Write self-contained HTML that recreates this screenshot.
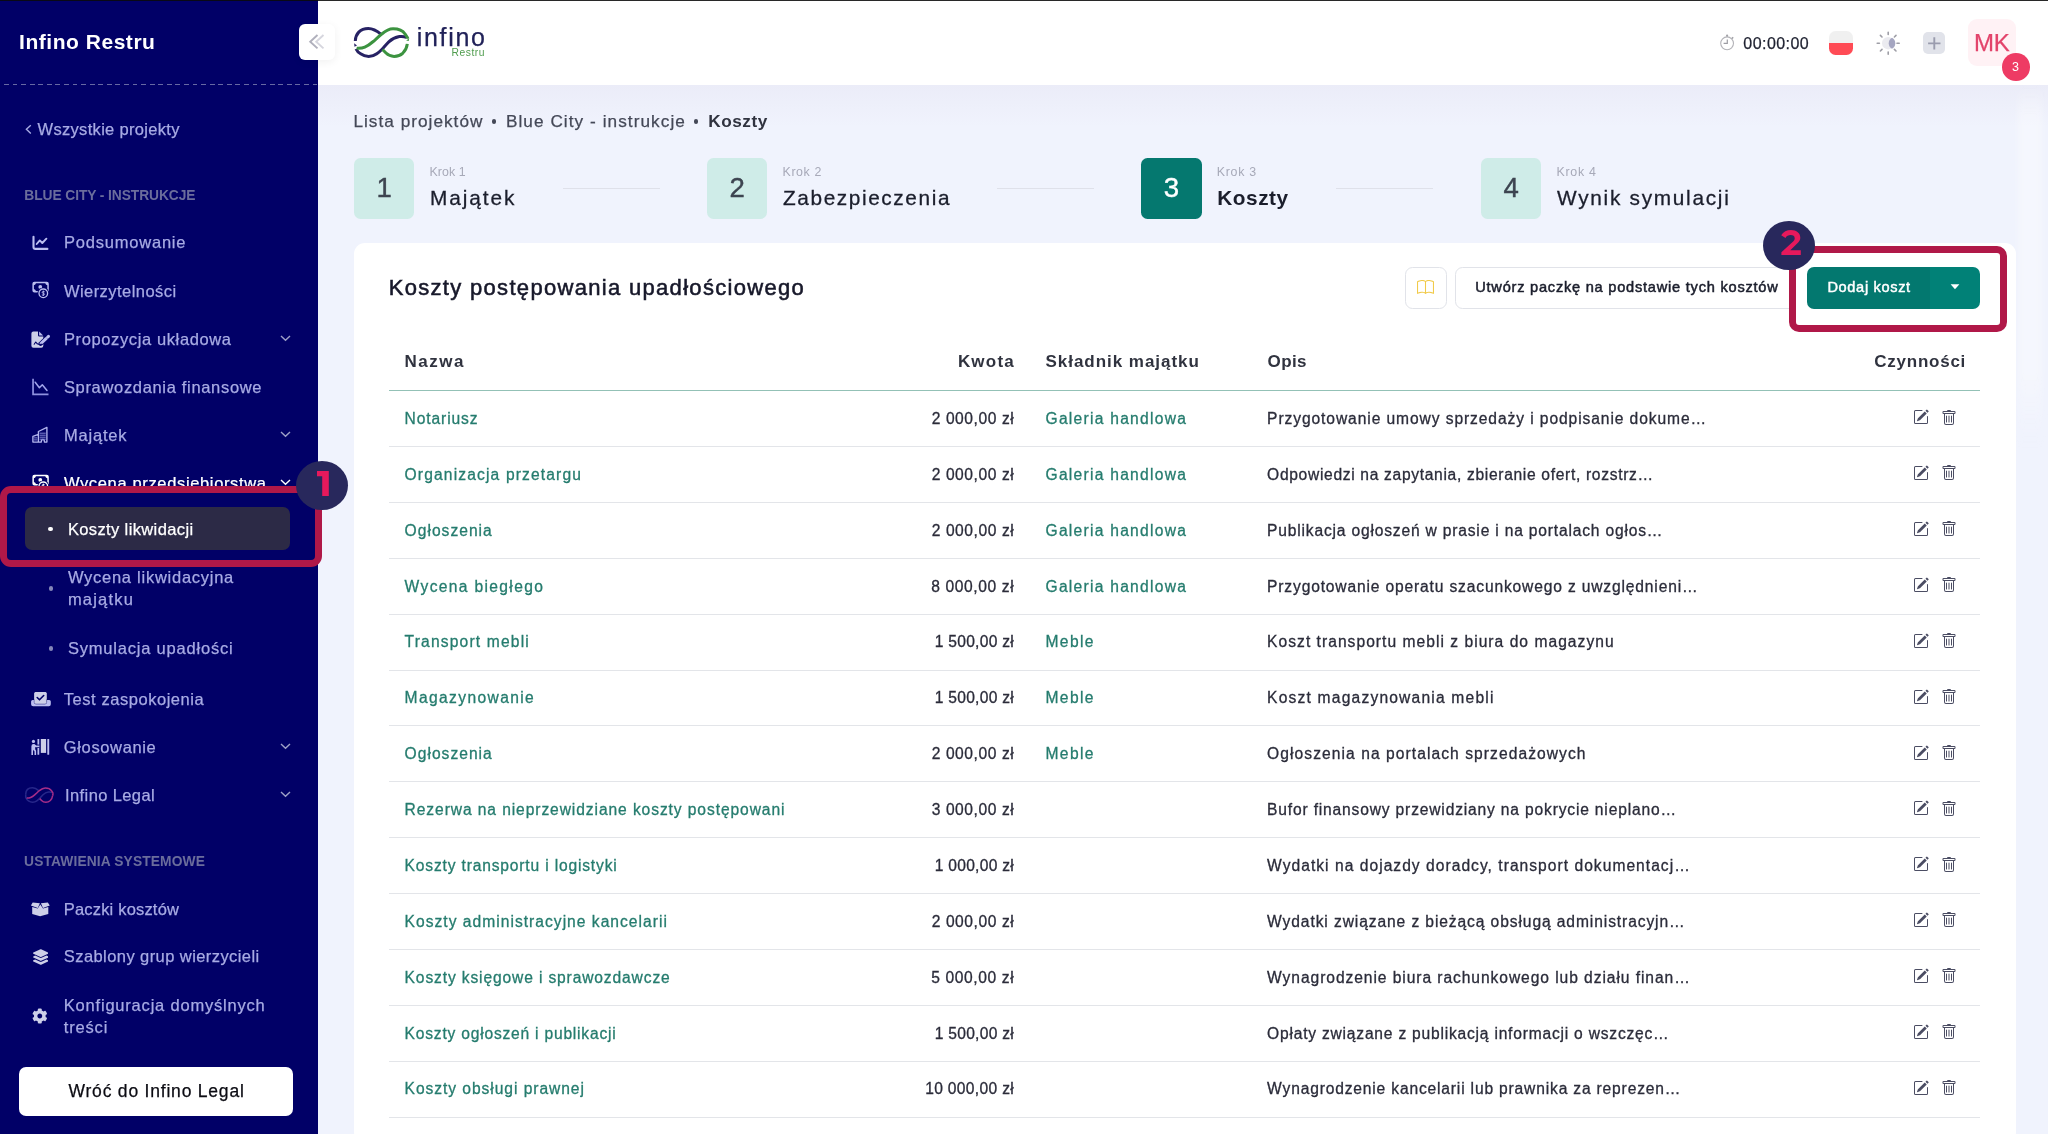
<!DOCTYPE html>
<html lang="pl"><head><meta charset="utf-8"><title>Infino Restru - Koszty</title>
<style>
html,body{margin:0;padding:0;}
body{width:2048px;height:1134px;overflow:hidden;position:relative;background:#f0f3fd;font-family:"Liberation Sans",sans-serif;}
.t{position:absolute;white-space:nowrap;line-height:1;display:block;}
.b{position:absolute;display:block;box-sizing:border-box;}
#root{position:absolute;left:0;top:0;width:2048px;height:1134px;overflow:hidden;will-change:transform;}
</style></head><body><div id="root">
<div class="b" style="left:318px;top:0px;width:1730px;height:85px;background:#fff;"></div>
<div class="b" style="left:318px;top:85px;width:1730px;height:42px;background:linear-gradient(#ebecf8,#f0f3fd);"></div>
<div class="b" style="left:0px;top:0px;width:318px;height:1134px;background:#010067;"></div>
<div class="b" style="left:0px;top:0px;width:2048px;height:1px;background:rgba(10,10,10,.88);"></div>
<div class="b" style="left:3.9px;top:83.8px;width:314.1px;height:1px;background:repeating-linear-gradient(90deg,#6769a3 0 4.9px,transparent 4.9px 8.57px);"></div>
<span class="t" style="top:31px;font-size:21px;color:#ffffff;letter-spacing:0.526px;font-weight:700;left:19.10px;">Infino Restru</span>
<div class="b" style="left:299px;top:24px;width:36px;height:36px;background:#fff;border-radius:6px;box-shadow:0 2px 8px rgba(0,0,0,.06);"></div>
<svg class="b" style="left:305px;top:30px;" width="24" height="24" viewBox="0 0 24 24"><path d="M18.5 5 L11.2 11.7 L18.5 18.4" fill="none" stroke="#d6d6de" stroke-width="1.9"/><path d="M12.5 5 L5.2 11.7 L12.5 18.4" fill="none" stroke="#b0b0bc" stroke-width="1.9"/></svg>
<svg class="b" style="left:24px;top:123px;" width="9" height="12" viewBox="0 0 9 12"><path d="M6.8 2.2 L2.4 6.3 L6.8 10.4" fill="none" stroke="#a8abe4" stroke-width="1.4"/></svg>
<span class="t" style="top:121px;font-size:16.5px;color:#a8abe4;letter-spacing:0.317px;-webkit-text-stroke:0.25px;left:37.50px;">Wszystkie projekty</span>
<span class="t" style="top:189px;font-size:13.8px;color:#6b6d9c;letter-spacing:-0.087px;font-weight:700;left:24.30px;">BLUE CITY - INSTRUKCJE</span>
<span class="t" style="top:234px;font-size:16.5px;color:#a8abe4;letter-spacing:0.799px;-webkit-text-stroke:0.25px;left:63.90px;">Podsumowanie</span>
<span class="t" style="top:283px;font-size:16.5px;color:#a8abe4;letter-spacing:0.450px;-webkit-text-stroke:0.25px;left:63.90px;">Wierzytelności</span>
<span class="t" style="top:331px;font-size:16.5px;color:#a8abe4;letter-spacing:0.622px;-webkit-text-stroke:0.25px;left:63.90px;">Propozycja układowa</span>
<svg class="b" style="left:279px;top:333.0px;" width="13" height="10" viewBox="0 0 13 10"><path d="M2 3 L6.5 7.3 L11 3" fill="none" stroke="#9ea0c8" stroke-width="1.4"/></svg>
<span class="t" style="top:379px;font-size:16.5px;color:#a8abe4;letter-spacing:0.674px;-webkit-text-stroke:0.25px;left:63.90px;">Sprawozdania finansowe</span>
<span class="t" style="top:427px;font-size:16.5px;color:#a8abe4;letter-spacing:0.822px;-webkit-text-stroke:0.25px;left:63.90px;">Majątek</span>
<svg class="b" style="left:279px;top:429.0px;" width="13" height="10" viewBox="0 0 13 10"><path d="M2 3 L6.5 7.3 L11 3" fill="none" stroke="#9ea0c8" stroke-width="1.4"/></svg>
<span class="t" style="top:475px;font-size:16.5px;color:#ffffff;letter-spacing:0.648px;-webkit-text-stroke:0.25px;left:63.90px;">Wycena przedsiębiorstwa</span>
<svg class="b" style="left:279px;top:477.3px;" width="13" height="10" viewBox="0 0 13 10"><path d="M2 3 L6.5 7.3 L11 3" fill="none" stroke="#ffffff" stroke-width="1.4"/></svg>
<svg class="b" style="left:30px;top:234px;" width="20" height="18" viewBox="0 0 20 18"><path d="M3.5 2.7 V12.9 a2 2 0 0 0 2 2 H17.4" fill="none" stroke="#bcbef0" stroke-width="2.1" stroke-linecap="round"/><path d="M6.7 10 L9.8 6.4 L12.3 9 L16.4 4.7" fill="none" stroke="#bcbef0" stroke-width="1.9" stroke-linecap="round" stroke-linejoin="round"/></svg>
<svg class="b" style="left:30px;top:279px;" width="22" height="22" viewBox="0 0 22 22"><rect x="3.15" y="3.55" width="14.9" height="9.2" rx="1.3" fill="none" stroke="#bcbef0" stroke-width="1.5"/><path d="M3.2 3.6 h2.7 a2.7 2.7 0 0 1 -2.7 2.7 Z M18 3.6 v2.7 a2.7 2.7 0 0 1 -2.7 -2.7 Z M3.2 12.7 v-2.7 a2.7 2.7 0 0 1 2.7 2.7 Z" fill="#bcbef0"/><circle cx="10.3" cy="7.9" r="1.9" fill="#bcbef0"/><circle cx="13.3" cy="14.3" r="5.9" fill="#010067"/><circle cx="13.3" cy="14.3" r="4.3" fill="none" stroke="#bcbef0" stroke-width="1.3"/><path d="M14.7 12.9 C14 12.2 12.2 12.3 12.2 13.4 C12.2 14.6 14.5 14 14.5 15.2 C14.5 16.3 12.6 16.4 11.9 15.7 M13.3 11.6 V17" fill="none" stroke="#bcbef0" stroke-width="0.9"/></svg>
<svg class="b" style="left:30px;top:330px;" width="22" height="20" viewBox="0 0 22 20"><path d="M3.4 1.4 H8 V5.3 a1.3 1.3 0 0 0 1.3 1.3 H13.3 V15.7 a2 2 0 0 1 -2 2 H3.4 a2 2 0 0 1 -2 -2 V3.4 a2 2 0 0 1 2 -2 Z" fill="#cdcfe8"/><path d="M9.1 1.6 L13.1 5.6 H9.6 a0.5 0.5 0 0 1 -0.5 -0.5 Z" fill="#bcbef0"/><path d="M10.6 13.8 L18.4 6.4" stroke="#010067" stroke-width="4.3" stroke-linecap="round"/><path d="M10.9 13.5 L16.6 8.1" stroke="#bcbef0" stroke-width="3" stroke-linecap="butt"/><path d="M17.5 7.25 L18.5 6.3" stroke="#bcbef0" stroke-width="3" stroke-linecap="round"/><path d="M9.2 15.3 L11.7 13.9 L9.9 12.2 Z" fill="#bcbef0"/><path d="M4.2 14.2 L5.7 12 C6.3 13.2 7.6 14.3 9.4 14.4 L12.2 14.2" fill="none" stroke="#010067" stroke-width="1.05" stroke-linecap="round" stroke-linejoin="round"/></svg>
<svg class="b" style="left:30px;top:376px;" width="22" height="22" viewBox="0 0 22 22"><path d="M3.05 2.8 V18.3 H18.5" fill="none" stroke="#8f91e0" stroke-width="1.7"/><path d="M5.2 6.2 L9.4 11.7 L12.3 8.8 L17 14.4" fill="none" stroke="#a3a5ec" stroke-width="1.5" stroke-linecap="round" stroke-linejoin="round"/></svg>
<svg class="b" style="left:30px;top:424px;" width="22" height="22" viewBox="0 0 22 22"><path d="M2.9 18.1 V12.4 L8.4 10.4 V7.5 L16.9 3.4 V18.1 H14.4 V17 a1.55 1.55 0 0 0 -3.1 0 V18.1 Z M8.4 10.4 V18.1" fill="none" stroke="#b3b5ee" stroke-width="1.35" stroke-linejoin="round"/><path d="M9.6 9.2 H15.7 M9.6 11.2 H15.7 M9.6 13.2 H15.7 M9.6 15.2 H15.7 M4 13.9 H7.3 M4 15.9 H7.3" stroke="#7f81d2" stroke-width="1"/></svg>
<svg class="b" style="left:30px;top:472px;" width="22" height="22" viewBox="0 0 22 22"><rect x="3.15" y="3.55" width="14.9" height="9.2" rx="1.3" fill="none" stroke="#ffffff" stroke-width="1.5"/><path d="M3.2 3.6 h2.7 a2.7 2.7 0 0 1 -2.7 2.7 Z M18 3.6 v2.7 a2.7 2.7 0 0 1 -2.7 -2.7 Z M3.2 12.7 v-2.7 a2.7 2.7 0 0 1 2.7 2.7 Z" fill="#ffffff"/><circle cx="10.3" cy="7.9" r="1.9" fill="#ffffff"/><circle cx="13.3" cy="14.3" r="5.9" fill="#010067"/><circle cx="13.3" cy="14.3" r="4.3" fill="none" stroke="#ffffff" stroke-width="1.3"/><path d="M14.7 12.9 C14 12.2 12.2 12.3 12.2 13.4 C12.2 14.6 14.5 14 14.5 15.2 C14.5 16.3 12.6 16.4 11.9 15.7 M13.3 11.6 V17" fill="none" stroke="#ffffff" stroke-width="0.9"/></svg>
<svg class="b" style="left:30px;top:690px;" width="22" height="18" viewBox="0 0 22 18"><path d="M1.1 11.5 a1.5 1.5 0 0 1 1.5 -1.5 H19.3 a1.5 1.5 0 0 1 1.5 1.5 V14.2 a2 2 0 0 1 -2 2 H3.1 a2 2 0 0 1 -2 -2 Z" fill="#bcbef0"/><rect x="4.35" y="1.9" width="12.2" height="11.9" rx="1.5" fill="#cdcfe8" stroke="#010067" stroke-width="0.9" style="paint-order:stroke"/><rect x="4.35" y="1.9" width="12.2" height="8" rx="1.5" fill="#cdcfe8"/><path d="M7.2 7.5 L9.5 9.8 L13.7 5.5" fill="none" stroke="#010067" stroke-width="1.6" stroke-linecap="round" stroke-linejoin="round"/></svg>
<svg class="b" style="left:30px;top:737px;" width="22" height="20" viewBox="0 0 22 20"><circle cx="3.45" cy="4.4" r="1.6" fill="#bcbef0"/><rect x="7.45" y="2" width="1.8" height="15.8" rx="0.5" fill="#bcbef0"/><path d="M4.6 9.3 H9.6" stroke="#010067" stroke-width="3.4"/><path d="M1.4 9.2 a2.2 2.2 0 0 1 2.2 -2.2 h0.8 l1.8 1.5 h3.2 v1.8 h-3.7 l-0.5 -0.35 v2.3 l0.9 1.6 v4.15 h-1.6 v-3.6 l-1 -1.7 l-0.5 1.9 v3.4 h-1.6 Z" fill="#bcbef0"/><rect x="10.8" y="2" width="5.3" height="13.9" fill="#cdcfe8"/><rect x="17.3" y="2" width="1.9" height="15.8" rx="0.5" fill="#bcbef0"/></svg>
<svg class="b" style="left:29px;top:900px;" width="24" height="18" viewBox="0 0 24 18"><path d="M3.2 7 V14.1 L11.1 16.3 L19.3 14.1 V7 L14 8.6 L11.3 4.4 L8.7 8.6 Z" fill="#cdcfe8"/><path d="M1.9 5.4 L3.7 2.5 L10.9 3.3 L8.8 7.9 Z M11.9 3.3 L18.8 2.5 L20.8 5.4 L14 7.9 Z" fill="#cdcfe8"/></svg>
<svg class="b" style="left:32.5px;top:949px;" width="15.6" height="16" viewBox="0 0 512 512"><path fill="#cdcfe8" d="M12.41 148.02l232.94 105.67c6.8 3.09 14.49 3.09 21.29 0l232.94-105.67c16.55-7.51 16.55-32.52 0-40.03L266.65 2.31a25.607 25.607 0 0 0-21.29 0L12.41 107.98c-16.55 7.51-16.55 32.53 0 40.04zm487.18 88.28l-58.09-26.33-161.64 73.27c-7.56 3.43-15.59 5.17-23.86 5.17s-16.29-1.74-23.86-5.17L70.51 209.97l-58.1 26.33c-16.55 7.5-16.55 32.5 0 40l232.94 105.59c6.8 3.08 14.49 3.08 21.29 0L499.59 276.3c16.55-7.5 16.55-32.5 0-40zm0 127.8l-57.87-26.23-161.86 73.37c-7.56 3.43-15.59 5.17-23.86 5.17s-16.29-1.74-23.86-5.17L70.29 337.87 12.41 364.1c-16.55 7.5-16.55 32.5 0 40l232.94 105.59c6.8 3.08 14.49 3.08 21.29 0L499.59 404.1c16.55-7.5 16.55-32.5 0-40z"/></svg>
<svg class="b" style="left:32.2px;top:1008.4px;" width="15.6" height="16" viewBox="0 0 512 512"><path fill="#cdcfe8" d="M487.4 315.7l-42.6-24.6c4.3-23.2 4.3-47 0-70.2l42.6-24.6c4.9-2.8 7.1-8.6 5.5-14-11.1-35.6-30-67.8-54.7-94.6-3.8-4.1-10-5.1-14.8-2.3L380.8 110c-17.9-15.4-38.5-27.3-60.8-35.1V25.8c0-5.6-3.900000000000034-10.5-9.400000000000034-11.7-36.7-8.2-74.3-7.8-109.2 0-5.5 1.2-9.4 6.1-9.4 11.7V75c-22.2 7.9-42.8 19.8-60.8 35.1L88.7 85.5c-4.9-2.8-11-1.9-14.8 2.3-24.7 26.7-43.6 58.9-54.7 94.6-1.7 5.4.6 11.2 5.5 14L67.3 221c-4.3 23.2-4.3 47 0 70.2l-42.6 24.6c-4.9 2.8-7.1 8.6-5.5 14 11.1 35.6 30 67.8 54.7 94.6 3.8 4.1 10 5.1 14.8 2.3l42.6-24.6c17.9 15.4 38.5 27.3 60.8 35.1v49.2c0 5.6 3.9 10.5 9.4 11.7 36.7 8.2 74.3 7.8 109.2 0 5.5-1.2 9.4-6.1 9.4-11.7v-49.2c22.2-7.9 42.8-19.8 60.8-35.1l42.6 24.6c4.9 2.8 11 1.9 14.8-2.3 24.7-26.7 43.6-58.9 54.700000000000045-94.6 1.5-5.5-.7-11.3-5.6-14.1zM256 336c-44.1 0-80-35.9-80-80s35.9-80 80-80 80 35.9 80 80-35.9 80-80 80z"/></svg>
<div class="b" style="left:0.4px;top:486.2px;width:321.6px;height:80.4px;background:#010067;border:7.5px solid #b01848;border-radius:11px;"></div>
<div class="b" style="left:24.7px;top:507px;width:265.3px;height:43.2px;background:#2c2a46;border-radius:7px;"></div>
<div class="b" style="left:48.2px;top:526.6px;width:4.8px;height:4.8px;background:#fff;border-radius:50%;"></div>
<span class="t" style="top:521px;font-size:16.5px;color:#ffffff;letter-spacing:0.375px;-webkit-text-stroke:0.25px;left:67.90px;">Koszty likwidacji</span>
<div class="b" style="left:296px;top:461px;width:52px;height:48.8px;background:#28285c;border-radius:50%;"></div>
<svg class="b" style="left:316.6px;top:470.8px;" width="12" height="25.6" viewBox="0 0 12 25.6"><path d="M0 0 H11.8 V25.5 H5.2 V5.3 H0 Z" fill="#e6195c"/></svg>
<div class="b" style="left:48.6px;top:586.4px;width:4.4px;height:4.4px;background:#8486b8;border-radius:50%;"></div>
<span class="t" style="top:569px;font-size:16.5px;color:#a8abe4;letter-spacing:0.740px;-webkit-text-stroke:0.25px;left:67.90px;">Wycena likwidacyjna</span>
<span class="t" style="top:591px;font-size:16.5px;color:#a8abe4;letter-spacing:1.205px;-webkit-text-stroke:0.25px;left:67.90px;">majątku</span>
<div class="b" style="left:48.6px;top:646.4px;width:4.4px;height:4.4px;background:#8486b8;border-radius:50%;"></div>
<span class="t" style="top:640px;font-size:16.5px;color:#a8abe4;letter-spacing:0.800px;-webkit-text-stroke:0.25px;left:67.90px;">Symulacja upadłości</span>
<span class="t" style="top:691px;font-size:16.5px;color:#a8abe4;letter-spacing:0.547px;-webkit-text-stroke:0.25px;left:63.80px;">Test zaspokojenia</span>
<span class="t" style="top:739px;font-size:16.5px;color:#a8abe4;letter-spacing:0.643px;-webkit-text-stroke:0.25px;left:63.80px;">Głosowanie</span>
<svg class="b" style="left:279px;top:740.9px;" width="13" height="10" viewBox="0 0 13 10"><path d="M2 3 L6.5 7.3 L11 3" fill="none" stroke="#9ea0c8" stroke-width="1.4"/></svg>
<span class="t" style="top:787px;font-size:16.5px;color:#a8abe4;letter-spacing:0.381px;-webkit-text-stroke:0.25px;left:65.10px;">Infino Legal</span>
<svg class="b" style="left:279px;top:789.0px;" width="13" height="10" viewBox="0 0 13 10"><path d="M2 3 L6.5 7.3 L11 3" fill="none" stroke="#9ea0c8" stroke-width="1.4"/></svg>
<span class="t" style="top:855px;font-size:13.8px;color:#6b6d9c;letter-spacing:0.114px;font-weight:700;left:24.10px;">USTAWIENIA SYSTEMOWE</span>
<span class="t" style="top:901px;font-size:16.5px;color:#a8abe4;letter-spacing:0.178px;-webkit-text-stroke:0.25px;left:63.80px;">Paczki kosztów</span>
<span class="t" style="top:948px;font-size:16.5px;color:#a8abe4;letter-spacing:0.423px;-webkit-text-stroke:0.25px;left:63.80px;">Szablony grup wierzycieli</span>
<span class="t" style="top:997px;font-size:16.5px;color:#a8abe4;letter-spacing:0.795px;-webkit-text-stroke:0.25px;left:63.80px;">Konfiguracja domyślnych</span>
<span class="t" style="top:1019px;font-size:16.5px;color:#a8abe4;letter-spacing:0.816px;-webkit-text-stroke:0.25px;left:63.80px;">treści</span>
<div class="b" style="left:18.8px;top:1067px;width:274.4px;height:48.8px;background:#fff;border-radius:7px;"></div>
<span class="t" style="top:1083px;font-size:17.5px;color:#0b0b12;letter-spacing:0.796px;-webkit-text-stroke:0.25px;left:68.50px;">Wróć do Infino Legal</span>
<svg class="b" style="left:352px;top:25px;" width="59.0" height="35.0" viewBox="0 0 59 35"><path d="M4 23.8 C5 26 6.5 27.5 8.6 28.8 C11 30.5 13.5 31.4 16.7 31.4 C20 31.4 22.5 30.5 24.8 28.8 C27 27.3 28.3 26 29.8 24.5 C32 22.3 34 19.5 36.8 16.8 C39.5 14.3 43 12.3 47.4 11.6 C50 11.2 52.5 11.6 54.5 12.5" fill="none" stroke="#272264" stroke-width="3.0"/><path d="M3.3 16 C3.5 9 8 3.5 16.35 3.5 C21.5 3.5 25.5 6.3 29.1 9.4" fill="none" stroke="#272264" stroke-width="3.0"/><path d="M4.7 23.3 C8 23.5 11 23 12.8 22.2 C17 20.4 20 17.5 22.7 15.3 C26 12.5 27.5 10.5 29.8 9 C33.5 5.8 37 3.7 41.05 3.7 C46.8 3.7 51 5.8 53.05 9 C54.2 10.8 55.6 12 55.9 13.8 M55.3 18.9 C54.8 23 53.5 25.5 50.9 28.05 C48.5 30.3 45.5 31.4 42.1 31.4 C38.5 31.4 36 30 34 28.05 L30.5 24.5" fill="none" stroke="#3c9340" stroke-width="3.0"/><path d="M2.1 18.3 L5 20.4 L2.5 21.7 Z" fill="#272264"/><path d="M54.2 15.4 L57 13.5 L56.8 16 Z" fill="#3c9340"/></svg>
<span class="t" style="top:25px;font-size:25px;color:#202158;letter-spacing:1.708px;-webkit-text-stroke:0.25px;left:416.70px;">infino</span>
<span class="t" style="top:48px;font-size:10.3px;color:#4f9c4d;letter-spacing:0.533px;left:451.50px;">Restru</span>
<svg class="b" style="left:24.2px;top:785.6px;" width="30.503" height="18.095" viewBox="0 0 59 35"><path d="M4 23.8 C5 26 6.5 27.5 8.6 28.8 C11 30.5 13.5 31.4 16.7 31.4 C20 31.4 22.5 30.5 24.8 28.8 C27 27.3 28.3 26 29.8 24.5 C32 22.3 34 19.5 36.8 16.8 C39.5 14.3 43 12.3 47.4 11.6 C50 11.2 52.5 11.6 54.5 12.5" fill="none" stroke="#27278a" stroke-width="3.0"/><path d="M3.3 16 C3.5 9 8 3.5 16.35 3.5 C21.5 3.5 25.5 6.3 29.1 9.4" fill="none" stroke="#27278a" stroke-width="3.0"/><path d="M4.7 23.3 C8 23.5 11 23 12.8 22.2 C17 20.4 20 17.5 22.7 15.3 C26 12.5 27.5 10.5 29.8 9 C33.5 5.8 37 3.7 41.05 3.7 C46.8 3.7 51 5.8 53.05 9 C54.2 10.8 55.6 12 55.9 13.8 M55.3 18.9 C54.8 23 53.5 25.5 50.9 28.05 C48.5 30.3 45.5 31.4 42.1 31.4 C38.5 31.4 36 30 34 28.05 L30.5 24.5" fill="none" stroke="#a62d88" stroke-width="3.0"/><path d="M55.9 13.8 C56.2 15.5 56 17 55.3 18.9" fill="none" stroke="#a62d88" stroke-width="3.0"/><path d="M3.3 16 C3.1 19 3.3 21.5 4 23.8" fill="none" stroke="#27278a" stroke-width="3.0"/></svg>
<svg class="b" style="left:1717px;top:33px;" width="20" height="20" viewBox="0 0 20 20"><circle cx="10.1" cy="10.3" r="6.4" fill="none" stroke="#b3b3b8" stroke-width="1.1"/><path d="M10.3 6.6 V10.3 H6.6" fill="none" stroke="#9c9ca3" stroke-width="1.2"/><circle cx="10.1" cy="2.7" r="1.1" fill="#a2a2a8"/><path d="M14.8 5.6 L16.2 4.2" stroke="#a2a2a8" stroke-width="1.5"/></svg>
<svg class="b" style="left:1874px;top:29px;" width="28" height="28" viewBox="0 0 28 28"><circle cx="14.2" cy="14.2" r="6.2" fill="#ebebf0"/><path d="M18 8.7 A6.25 6.25 0 0 1 18 19.7 A6.25 6.25 0 0 1 18 8.7 Z" fill="#a5a6c1"/><g stroke="#9e9ea6" stroke-width="1.6" stroke-linecap="round"><path d="M14.2 3.2 V5.4 M14.2 23 V25.2 M3.2 14.2 H5.4 M23 14.2 H25.2 M6.4 6.4 L8 8 M20.4 20.4 L22 22 M6.4 22 L8 20.4 M20.4 8 L22 6.4"/></g></svg>
<span class="t" style="top:36px;font-size:16px;color:#1e2130;letter-spacing:0.446px;-webkit-text-stroke:0.25px;left:1743.30px;">00:00:00</span>
<div class="b" style="left:1829.1px;top:30.8px;width:24.3px;height:24.3px;border-radius:6.5px;background:linear-gradient(#f0f0f0 0 50%,#ff4b55 50% 100%);"></div>
<div class="b" style="left:1922.6px;top:31.8px;width:22.6px;height:22.7px;background:#e1e3ea;border-radius:5px;"></div>
<svg class="b" style="left:1922.6px;top:31.8px;" width="22.6" height="22.7" viewBox="0 0 22.6 22.7"><path d="M11.3 5.2 V17.5 M5.1 11.35 H17.5" stroke="#9a9cae" stroke-width="1.9" fill="none"/></svg>
<div class="b" style="left:1967.6px;top:19.3px;width:48.8px;height:46.8px;background:#fff2f5;border-radius:9px;"></div>
<span class="t" style="top:31px;font-size:24px;color:#e3446b;letter-spacing:-0.100px;-webkit-text-stroke:0.25px;left:1973.90px;">MK</span>
<div class="b" style="left:2002.3px;top:53.1px;width:27.6px;height:27.6px;background:#ee3b64;border-radius:50%;"></div>
<span class="t" style="top:61px;font-size:12.5px;color:#ffffff;left:2012.10px;">3</span>
<div class="b" style="left:2018px;top:85px;width:24px;height:360px;background:linear-gradient(180deg,rgba(255,255,255,0) 0,rgba(255,255,255,.35) 8%,rgba(255,255,255,.35) 80%,rgba(255,255,255,0) 100%);filter:blur(3px);"></div>
<span class="t" style="top:113px;font-size:17.2px;color:#444857;letter-spacing:1.027px;-webkit-text-stroke:0.25px;left:353.40px;">Lista projektów</span>
<div class="b" style="left:491.7px;top:119.4px;width:4.6px;height:4.6px;background:#444857;border-radius:50%;"></div>
<span class="t" style="top:113px;font-size:17.2px;color:#444857;letter-spacing:1.064px;-webkit-text-stroke:0.25px;left:505.90px;">Blue City - instrukcje</span>
<div class="b" style="left:693.9px;top:119.4px;width:4.6px;height:4.6px;background:#444857;border-radius:50%;"></div>
<span class="t" style="top:113px;font-size:17.2px;color:#30333f;letter-spacing:0.563px;font-weight:700;left:708.20px;">Koszty</span>
<div class="b" style="left:354.0px;top:157.9px;width:60.2px;height:60.7px;background:#cfece8;border-radius:6.5px;"></div>
<span class="t" style="left:354.0px;width:60.4px;text-align:center;top:174px;font-size:27.6px;color:#3d4450;-webkit-text-stroke:0.4px;">1</span>
<span class="t" style="top:166px;font-size:12.4px;color:#a7a9b8;letter-spacing:0.073px;left:429.50px;">Krok 1</span>
<span class="t" style="top:188px;font-size:20.8px;color:#1b1e2c;letter-spacing:1.946px;left:430.00px;-webkit-text-stroke:0.3px #1b1e2c;">Majątek</span>
<div class="b" style="left:707.0px;top:157.9px;width:60.2px;height:60.7px;background:#cfece8;border-radius:6.5px;"></div>
<span class="t" style="left:707.0px;width:60.4px;text-align:center;top:174px;font-size:27.6px;color:#3d4450;-webkit-text-stroke:0.4px;">2</span>
<span class="t" style="top:166px;font-size:12.4px;color:#a7a9b8;letter-spacing:0.613px;left:782.50px;">Krok 2</span>
<span class="t" style="top:188px;font-size:20.8px;color:#1b1e2c;letter-spacing:1.601px;left:783.00px;-webkit-text-stroke:0.3px #1b1e2c;">Zabezpieczenia</span>
<div class="b" style="left:1141.3px;top:157.9px;width:60.6px;height:60.7px;background:#05786f;border-radius:6.5px;"></div>
<span class="t" style="left:1141.3px;width:60.4px;text-align:center;top:174px;font-size:27.6px;color:#ffffff;-webkit-text-stroke:0.4px;">3</span>
<span class="t" style="top:166px;font-size:12.4px;color:#a7a9b8;letter-spacing:0.693px;left:1216.80px;">Krok 3</span>
<span class="t" style="top:188px;font-size:20.8px;color:#1b1e2c;letter-spacing:0.523px;font-weight:700;left:1217.30px;">Koszty</span>
<div class="b" style="left:1481.0px;top:157.9px;width:60.2px;height:60.7px;background:#cfece8;border-radius:6.5px;"></div>
<span class="t" style="left:1481.0px;width:60.4px;text-align:center;top:174px;font-size:27.6px;color:#3d4450;-webkit-text-stroke:0.4px;">4</span>
<span class="t" style="top:166px;font-size:12.4px;color:#a7a9b8;letter-spacing:0.733px;left:1556.50px;">Krok 4</span>
<span class="t" style="top:188px;font-size:20.8px;color:#1b1e2c;letter-spacing:1.718px;left:1557.00px;-webkit-text-stroke:0.3px #1b1e2c;">Wynik symulacji</span>
<div class="b" style="left:562.5px;top:187.5px;width:97.5px;height:1.2px;background:#dfe1ea;"></div>
<div class="b" style="left:996.6px;top:187.5px;width:97.10000000000002px;height:1.2px;background:#dfe1ea;"></div>
<div class="b" style="left:1336px;top:187.5px;width:97.40000000000009px;height:1.2px;background:#dfe1ea;"></div>
<div class="b" style="left:354px;top:242.8px;width:1661.6px;height:900px;background:#fff;border-radius:11px;"></div>
<span class="t" style="top:277px;font-size:22px;color:#17182a;letter-spacing:1.313px;left:388.70px;-webkit-text-stroke:0.55px #17182a;">Koszty postępowania upadłościowego</span>
<div class="b" style="left:1405px;top:267px;width:42px;height:41.8px;background:#fff;border:1.2px solid #e1e3e9;border-radius:7.5px;"></div>
<svg class="b" style="left:1417.2px;top:279.2px;" width="17" height="17" viewBox="0 0 16 16"><path fill="#f1ca4a" d="M1 2.828c.885-.37 2.154-.769 3.388-.893 1.33-.134 2.458.063 3.112.752v9.746c-.935-.53-2.12-.603-3.213-.493-1.18.12-2.37.461-3.287.811V2.828zm7.5-.141c.654-.689 1.782-.886 3.112-.752 1.234.124 2.503.523 3.388.893v9.923c-.918-.35-2.107-.692-3.287-.81-1.094-.111-2.278-.039-3.213.492V2.687zM8 1.783C7.015.936 5.587.81 4.287.94c-1.514.153-3.042.672-3.994 1.105A.5.5 0 0 0 0 2.500v11a.5.5 0 0 0 .707.455c.882-.4 2.303-.881 3.68-1.020 1.409-.142 2.590.087 3.223.877a.5.5 0 0 0 .780 0c.633-.790 1.814-1.019 3.222-.877 1.378.139 2.800.620 3.681 1.020A.5.5 0 0 0 16 13.500v-11a.5.5 0 0 0-.293-.455c-.952-.433-2.480-.952-3.994-1.105C10.413.809 8.985.936 8 1.783z"/></svg>
<div class="b" style="left:1455.2px;top:267px;width:342px;height:41.8px;background:#fff;border:1.2px solid #e1e3e9;border-radius:7.5px;"></div>
<span class="t" style="top:280px;font-size:14.6px;color:#1b1e2c;letter-spacing:0.770px;left:1475.20px;-webkit-text-stroke:0.5px #1b1e2c;">Utwórz paczkę na podstawie tych kosztów</span>
<div class="b" style="left:1789.3px;top:245.9px;width:218.1px;height:85.8px;background:#fff;border:7.4px solid #b01848;border-radius:10px;"></div>
<div class="b" style="left:1806.7px;top:267.1px;width:173.6px;height:41.8px;background:linear-gradient(90deg,#03786f 0 123.3px,#018177 123.3px 100%);border-radius:7px;"></div>
<span class="t" style="top:280px;font-size:14.6px;color:#ffffff;letter-spacing:0.652px;left:1827.40px;-webkit-text-stroke:0.45px #fff;">Dodaj koszt</span>
<svg class="b" style="left:1950.4px;top:283.8px;" width="10" height="6" viewBox="0 0 10 6"><path d="M0.6 0.3 H9.4 L5 5.2 Z" fill="#fff"/></svg>
<div class="b" style="left:1762.9px;top:220.9px;width:51.8px;height:48.8px;background:#28285c;border-radius:50%;"></div>
<svg class="b" style="left:1780.6px;top:229.8px;" width="20" height="25.6" viewBox="0 0 20 25.6"><path d="M0.4 25.5 H19.8 V20.3 H9.3 L16.2 13.6 C18.5 11.3 19.3 9.6 19.3 7.7 C19.3 3.2 15.6 0 10 0 C5.8 0 2.3 1.9 0.2 5.2 L4.5 7.9 C5.6 6.1 7.4 5.1 9.6 5.1 C12.2 5.1 13.7 6.3 13.7 8.2 C13.7 9.5 13.1 10.6 11.3 12.3 L0.4 22.2 Z" fill="#e6195c"/></svg>
<span class="t" style="top:353px;font-size:17px;color:#30333f;letter-spacing:1.473px;font-weight:700;left:404.60px;">Nazwa</span>
<span class="t" style="top:353px;font-size:17px;color:#30333f;letter-spacing:1.201px;font-weight:700;right:1033.10px;">Kwota</span>
<span class="t" style="top:353px;font-size:17px;color:#30333f;letter-spacing:0.968px;font-weight:700;left:1045.50px;">Składnik majątku</span>
<span class="t" style="top:353px;font-size:17px;color:#30333f;letter-spacing:0.406px;font-weight:700;left:1267.50px;">Opis</span>
<span class="t" style="top:353px;font-size:17px;color:#30333f;letter-spacing:0.749px;font-weight:700;right:81.95px;">Czynności</span>
<div class="b" style="left:389px;top:390px;width:1591.3px;height:1px;background:#93c1b6;"></div>
<span class="t" style="top:411px;font-size:15.6px;color:#257c6e;letter-spacing:0.889px;left:404.60px;-webkit-text-stroke:0.3px #257c6e;">Notariusz</span>
<span class="t" style="top:411px;font-size:15.6px;color:#2b2c3a;letter-spacing:0.568px;right:1033.73px;-webkit-text-stroke:0.3px #2b2c3a;">2 000,00 zł</span>
<span class="t" style="top:411px;font-size:15.6px;color:#257c6e;letter-spacing:1.267px;left:1045.50px;-webkit-text-stroke:0.3px #257c6e;">Galeria handlowa</span>
<span class="t" style="top:411px;font-size:15.6px;color:#2b2c3a;letter-spacing:0.912px;left:1267.10px;-webkit-text-stroke:0.3px #2b2c3a;">Przygotowanie umowy sprzedaży i podpisanie dokume…</span>
<div class="b" style="left:389px;top:446px;width:1591.3px;height:1px;background:#e3e5e9;"></div>
<svg class="b" style="left:1913px;top:409.29999999999995px;fill:#4b4d63;" width="16" height="16" viewBox="0 0 16 16"><path d="M15.502 1.94a.5.5 0 0 1 0 .706L14.459 3.69l-2-2L13.502.646a.5.5 0 0 1 .707 0l1.293 1.293zm-1.75 2.456-2-2L4.939 9.21a.5.5 0 0 0-.121.196l-.805 2.414a.25.25 0 0 0 .316.316l2.414-.805a.5.5 0 0 0 .196-.12l6.813-6.814z"/><path fill-rule="evenodd" d="M1 13.5A1.5 1.5 0 0 0 2.5 15h11a1.5 1.5 0 0 0 1.5-1.5v-6a.5.5 0 0 0-1 0v6a.5.5 0 0 1-.5.5h-11a.5.5 0 0 1-.5-.5v-11a.5.5 0 0 1 .5-.5H9a.5.5 0 0 0 0-1H2.5A1.5 1.5 0 0 0 1 2.5v11z"/></svg>
<svg class="b" style="left:1941px;top:409.59999999999997px;fill:#4b4d63;" width="16" height="16" viewBox="0 0 16 16"><path d="M5.5 5.5A.5.5 0 0 1 6 6v6a.5.5 0 0 1-1 0V6a.5.5 0 0 1 .5-.5zm2.5 0a.5.5 0 0 1 .5.5v6a.5.5 0 0 1-1 0V6a.5.5 0 0 1 .5-.5zm3 .5a.5.5 0 0 0-1 0v6a.5.5 0 0 0 1 0V6z"/><path fill-rule="evenodd" d="M14.5 3a1 1 0 0 1-1 1H13v9a2 2 0 0 1-2 2H5a2 2 0 0 1-2-2V4h-.5a1 1 0 0 1-1-1V2a1 1 0 0 1 1-1H6a1 1 0 0 1 1-1h2a1 1 0 0 1 1 1h3.5a1 1 0 0 1 1 1v1zM4.118 4 4 4.059V13a1 1 0 0 0 1 1h6a1 1 0 0 0 1-1V4.059L11.882 4H4.118zM2.5 3V2h11v1h-11z"/></svg>
<span class="t" style="top:467px;font-size:15.6px;color:#257c6e;letter-spacing:1.147px;left:404.60px;-webkit-text-stroke:0.3px #257c6e;">Organizacja przetargu</span>
<span class="t" style="top:467px;font-size:15.6px;color:#2b2c3a;letter-spacing:0.568px;right:1033.73px;-webkit-text-stroke:0.3px #2b2c3a;">2 000,00 zł</span>
<span class="t" style="top:467px;font-size:15.6px;color:#257c6e;letter-spacing:1.267px;left:1045.50px;-webkit-text-stroke:0.3px #257c6e;">Galeria handlowa</span>
<span class="t" style="top:467px;font-size:15.6px;color:#2b2c3a;letter-spacing:0.678px;left:1267.10px;-webkit-text-stroke:0.3px #2b2c3a;">Odpowiedzi na zapytania, zbieranie ofert, rozstrz…</span>
<div class="b" style="left:389px;top:502px;width:1591.3px;height:1px;background:#e3e5e9;"></div>
<svg class="b" style="left:1913px;top:465.17499999999995px;fill:#4b4d63;" width="16" height="16" viewBox="0 0 16 16"><path d="M15.502 1.94a.5.5 0 0 1 0 .706L14.459 3.69l-2-2L13.502.646a.5.5 0 0 1 .707 0l1.293 1.293zm-1.75 2.456-2-2L4.939 9.21a.5.5 0 0 0-.121.196l-.805 2.414a.25.25 0 0 0 .316.316l2.414-.805a.5.5 0 0 0 .196-.12l6.813-6.814z"/><path fill-rule="evenodd" d="M1 13.5A1.5 1.5 0 0 0 2.5 15h11a1.5 1.5 0 0 0 1.5-1.5v-6a.5.5 0 0 0-1 0v6a.5.5 0 0 1-.5.5h-11a.5.5 0 0 1-.5-.5v-11a.5.5 0 0 1 .5-.5H9a.5.5 0 0 0 0-1H2.5A1.5 1.5 0 0 0 1 2.5v11z"/></svg>
<svg class="b" style="left:1941px;top:465.47499999999997px;fill:#4b4d63;" width="16" height="16" viewBox="0 0 16 16"><path d="M5.5 5.5A.5.5 0 0 1 6 6v6a.5.5 0 0 1-1 0V6a.5.5 0 0 1 .5-.5zm2.5 0a.5.5 0 0 1 .5.5v6a.5.5 0 0 1-1 0V6a.5.5 0 0 1 .5-.5zm3 .5a.5.5 0 0 0-1 0v6a.5.5 0 0 0 1 0V6z"/><path fill-rule="evenodd" d="M14.5 3a1 1 0 0 1-1 1H13v9a2 2 0 0 1-2 2H5a2 2 0 0 1-2-2V4h-.5a1 1 0 0 1-1-1V2a1 1 0 0 1 1-1H6a1 1 0 0 1 1-1h2a1 1 0 0 1 1 1h3.5a1 1 0 0 1 1 1v1zM4.118 4 4 4.059V13a1 1 0 0 0 1 1h6a1 1 0 0 0 1-1V4.059L11.882 4H4.118zM2.5 3V2h11v1h-11z"/></svg>
<span class="t" style="top:523px;font-size:15.6px;color:#257c6e;letter-spacing:1.018px;left:404.60px;-webkit-text-stroke:0.3px #257c6e;">Ogłoszenia</span>
<span class="t" style="top:523px;font-size:15.6px;color:#2b2c3a;letter-spacing:0.568px;right:1033.73px;-webkit-text-stroke:0.3px #2b2c3a;">2 000,00 zł</span>
<span class="t" style="top:523px;font-size:15.6px;color:#257c6e;letter-spacing:1.267px;left:1045.50px;-webkit-text-stroke:0.3px #257c6e;">Galeria handlowa</span>
<span class="t" style="top:523px;font-size:15.6px;color:#2b2c3a;letter-spacing:0.814px;left:1267.10px;-webkit-text-stroke:0.3px #2b2c3a;">Publikacja ogłoszeń w prasie i na portalach ogłos…</span>
<div class="b" style="left:389px;top:558px;width:1591.3px;height:1px;background:#e3e5e9;"></div>
<svg class="b" style="left:1913px;top:521.05px;fill:#4b4d63;" width="16" height="16" viewBox="0 0 16 16"><path d="M15.502 1.94a.5.5 0 0 1 0 .706L14.459 3.69l-2-2L13.502.646a.5.5 0 0 1 .707 0l1.293 1.293zm-1.75 2.456-2-2L4.939 9.21a.5.5 0 0 0-.121.196l-.805 2.414a.25.25 0 0 0 .316.316l2.414-.805a.5.5 0 0 0 .196-.12l6.813-6.814z"/><path fill-rule="evenodd" d="M1 13.5A1.5 1.5 0 0 0 2.5 15h11a1.5 1.5 0 0 0 1.5-1.5v-6a.5.5 0 0 0-1 0v6a.5.5 0 0 1-.5.5h-11a.5.5 0 0 1-.5-.5v-11a.5.5 0 0 1 .5-.5H9a.5.5 0 0 0 0-1H2.5A1.5 1.5 0 0 0 1 2.5v11z"/></svg>
<svg class="b" style="left:1941px;top:521.35px;fill:#4b4d63;" width="16" height="16" viewBox="0 0 16 16"><path d="M5.5 5.5A.5.5 0 0 1 6 6v6a.5.5 0 0 1-1 0V6a.5.5 0 0 1 .5-.5zm2.5 0a.5.5 0 0 1 .5.5v6a.5.5 0 0 1-1 0V6a.5.5 0 0 1 .5-.5zm3 .5a.5.5 0 0 0-1 0v6a.5.5 0 0 0 1 0V6z"/><path fill-rule="evenodd" d="M14.5 3a1 1 0 0 1-1 1H13v9a2 2 0 0 1-2 2H5a2 2 0 0 1-2-2V4h-.5a1 1 0 0 1-1-1V2a1 1 0 0 1 1-1H6a1 1 0 0 1 1-1h2a1 1 0 0 1 1 1h3.5a1 1 0 0 1 1 1v1zM4.118 4 4 4.059V13a1 1 0 0 0 1 1h6a1 1 0 0 0 1-1V4.059L11.882 4H4.118zM2.5 3V2h11v1h-11z"/></svg>
<span class="t" style="top:579px;font-size:15.6px;color:#257c6e;letter-spacing:1.341px;left:404.60px;-webkit-text-stroke:0.3px #257c6e;">Wycena biegłego</span>
<span class="t" style="top:579px;font-size:15.6px;color:#2b2c3a;letter-spacing:0.618px;right:1033.68px;-webkit-text-stroke:0.3px #2b2c3a;">8 000,00 zł</span>
<span class="t" style="top:579px;font-size:15.6px;color:#257c6e;letter-spacing:1.267px;left:1045.50px;-webkit-text-stroke:0.3px #257c6e;">Galeria handlowa</span>
<span class="t" style="top:579px;font-size:15.6px;color:#2b2c3a;letter-spacing:0.842px;left:1267.10px;-webkit-text-stroke:0.3px #2b2c3a;">Przygotowanie operatu szacunkowego z uwzględnieni…</span>
<div class="b" style="left:389px;top:614px;width:1591.3px;height:1px;background:#e3e5e9;"></div>
<svg class="b" style="left:1913px;top:576.925px;fill:#4b4d63;" width="16" height="16" viewBox="0 0 16 16"><path d="M15.502 1.94a.5.5 0 0 1 0 .706L14.459 3.69l-2-2L13.502.646a.5.5 0 0 1 .707 0l1.293 1.293zm-1.75 2.456-2-2L4.939 9.21a.5.5 0 0 0-.121.196l-.805 2.414a.25.25 0 0 0 .316.316l2.414-.805a.5.5 0 0 0 .196-.12l6.813-6.814z"/><path fill-rule="evenodd" d="M1 13.5A1.5 1.5 0 0 0 2.5 15h11a1.5 1.5 0 0 0 1.5-1.5v-6a.5.5 0 0 0-1 0v6a.5.5 0 0 1-.5.5h-11a.5.5 0 0 1-.5-.5v-11a.5.5 0 0 1 .5-.5H9a.5.5 0 0 0 0-1H2.5A1.5 1.5 0 0 0 1 2.5v11z"/></svg>
<svg class="b" style="left:1941px;top:577.225px;fill:#4b4d63;" width="16" height="16" viewBox="0 0 16 16"><path d="M5.5 5.5A.5.5 0 0 1 6 6v6a.5.5 0 0 1-1 0V6a.5.5 0 0 1 .5-.5zm2.5 0a.5.5 0 0 1 .5.5v6a.5.5 0 0 1-1 0V6a.5.5 0 0 1 .5-.5zm3 .5a.5.5 0 0 0-1 0v6a.5.5 0 0 0 1 0V6z"/><path fill-rule="evenodd" d="M14.5 3a1 1 0 0 1-1 1H13v9a2 2 0 0 1-2 2H5a2 2 0 0 1-2-2V4h-.5a1 1 0 0 1-1-1V2a1 1 0 0 1 1-1H6a1 1 0 0 1 1-1h2a1 1 0 0 1 1 1h3.5a1 1 0 0 1 1 1v1zM4.118 4 4 4.059V13a1 1 0 0 0 1 1h6a1 1 0 0 0 1-1V4.059L11.882 4H4.118zM2.5 3V2h11v1h-11z"/></svg>
<span class="t" style="top:634px;font-size:15.6px;color:#257c6e;letter-spacing:1.173px;left:404.60px;-webkit-text-stroke:0.3px #257c6e;">Transport mebli</span>
<span class="t" style="top:634px;font-size:15.6px;color:#2b2c3a;letter-spacing:0.268px;right:1034.03px;-webkit-text-stroke:0.3px #2b2c3a;">1 500,00 zł</span>
<span class="t" style="top:634px;font-size:15.6px;color:#257c6e;letter-spacing:1.379px;left:1045.50px;-webkit-text-stroke:0.3px #257c6e;">Meble</span>
<span class="t" style="top:634px;font-size:15.6px;color:#2b2c3a;letter-spacing:1.031px;left:1267.10px;-webkit-text-stroke:0.3px #2b2c3a;">Koszt transportu mebli z biura do magazynu</span>
<div class="b" style="left:389px;top:670px;width:1591.3px;height:1px;background:#e3e5e9;"></div>
<svg class="b" style="left:1913px;top:632.8px;fill:#4b4d63;" width="16" height="16" viewBox="0 0 16 16"><path d="M15.502 1.94a.5.5 0 0 1 0 .706L14.459 3.69l-2-2L13.502.646a.5.5 0 0 1 .707 0l1.293 1.293zm-1.75 2.456-2-2L4.939 9.21a.5.5 0 0 0-.121.196l-.805 2.414a.25.25 0 0 0 .316.316l2.414-.805a.5.5 0 0 0 .196-.12l6.813-6.814z"/><path fill-rule="evenodd" d="M1 13.5A1.5 1.5 0 0 0 2.5 15h11a1.5 1.5 0 0 0 1.5-1.5v-6a.5.5 0 0 0-1 0v6a.5.5 0 0 1-.5.5h-11a.5.5 0 0 1-.5-.5v-11a.5.5 0 0 1 .5-.5H9a.5.5 0 0 0 0-1H2.5A1.5 1.5 0 0 0 1 2.5v11z"/></svg>
<svg class="b" style="left:1941px;top:633.1px;fill:#4b4d63;" width="16" height="16" viewBox="0 0 16 16"><path d="M5.5 5.5A.5.5 0 0 1 6 6v6a.5.5 0 0 1-1 0V6a.5.5 0 0 1 .5-.5zm2.5 0a.5.5 0 0 1 .5.5v6a.5.5 0 0 1-1 0V6a.5.5 0 0 1 .5-.5zm3 .5a.5.5 0 0 0-1 0v6a.5.5 0 0 0 1 0V6z"/><path fill-rule="evenodd" d="M14.5 3a1 1 0 0 1-1 1H13v9a2 2 0 0 1-2 2H5a2 2 0 0 1-2-2V4h-.5a1 1 0 0 1-1-1V2a1 1 0 0 1 1-1H6a1 1 0 0 1 1-1h2a1 1 0 0 1 1 1h3.5a1 1 0 0 1 1 1v1zM4.118 4 4 4.059V13a1 1 0 0 0 1 1h6a1 1 0 0 0 1-1V4.059L11.882 4H4.118zM2.5 3V2h11v1h-11z"/></svg>
<span class="t" style="top:690px;font-size:15.6px;color:#257c6e;letter-spacing:1.373px;left:404.60px;-webkit-text-stroke:0.3px #257c6e;">Magazynowanie</span>
<span class="t" style="top:690px;font-size:15.6px;color:#2b2c3a;letter-spacing:0.268px;right:1034.03px;-webkit-text-stroke:0.3px #2b2c3a;">1 500,00 zł</span>
<span class="t" style="top:690px;font-size:15.6px;color:#257c6e;letter-spacing:1.379px;left:1045.50px;-webkit-text-stroke:0.3px #257c6e;">Meble</span>
<span class="t" style="top:690px;font-size:15.6px;color:#2b2c3a;letter-spacing:1.196px;left:1267.10px;-webkit-text-stroke:0.3px #2b2c3a;">Koszt magazynowania mebli</span>
<div class="b" style="left:389px;top:725px;width:1591.3px;height:1px;background:#e3e5e9;"></div>
<svg class="b" style="left:1913px;top:688.675px;fill:#4b4d63;" width="16" height="16" viewBox="0 0 16 16"><path d="M15.502 1.94a.5.5 0 0 1 0 .706L14.459 3.69l-2-2L13.502.646a.5.5 0 0 1 .707 0l1.293 1.293zm-1.75 2.456-2-2L4.939 9.21a.5.5 0 0 0-.121.196l-.805 2.414a.25.25 0 0 0 .316.316l2.414-.805a.5.5 0 0 0 .196-.12l6.813-6.814z"/><path fill-rule="evenodd" d="M1 13.5A1.5 1.5 0 0 0 2.5 15h11a1.5 1.5 0 0 0 1.5-1.5v-6a.5.5 0 0 0-1 0v6a.5.5 0 0 1-.5.5h-11a.5.5 0 0 1-.5-.5v-11a.5.5 0 0 1 .5-.5H9a.5.5 0 0 0 0-1H2.5A1.5 1.5 0 0 0 1 2.5v11z"/></svg>
<svg class="b" style="left:1941px;top:688.975px;fill:#4b4d63;" width="16" height="16" viewBox="0 0 16 16"><path d="M5.5 5.5A.5.5 0 0 1 6 6v6a.5.5 0 0 1-1 0V6a.5.5 0 0 1 .5-.5zm2.5 0a.5.5 0 0 1 .5.5v6a.5.5 0 0 1-1 0V6a.5.5 0 0 1 .5-.5zm3 .5a.5.5 0 0 0-1 0v6a.5.5 0 0 0 1 0V6z"/><path fill-rule="evenodd" d="M14.5 3a1 1 0 0 1-1 1H13v9a2 2 0 0 1-2 2H5a2 2 0 0 1-2-2V4h-.5a1 1 0 0 1-1-1V2a1 1 0 0 1 1-1H6a1 1 0 0 1 1-1h2a1 1 0 0 1 1 1h3.5a1 1 0 0 1 1 1v1zM4.118 4 4 4.059V13a1 1 0 0 0 1 1h6a1 1 0 0 0 1-1V4.059L11.882 4H4.118zM2.5 3V2h11v1h-11z"/></svg>
<span class="t" style="top:746px;font-size:15.6px;color:#257c6e;letter-spacing:1.018px;left:404.60px;-webkit-text-stroke:0.3px #257c6e;">Ogłoszenia</span>
<span class="t" style="top:746px;font-size:15.6px;color:#2b2c3a;letter-spacing:0.568px;right:1033.73px;-webkit-text-stroke:0.3px #2b2c3a;">2 000,00 zł</span>
<span class="t" style="top:746px;font-size:15.6px;color:#257c6e;letter-spacing:1.379px;left:1045.50px;-webkit-text-stroke:0.3px #257c6e;">Meble</span>
<span class="t" style="top:746px;font-size:15.6px;color:#2b2c3a;letter-spacing:1.067px;left:1267.10px;-webkit-text-stroke:0.3px #2b2c3a;">Ogłoszenia na portalach sprzedażowych</span>
<div class="b" style="left:389px;top:781px;width:1591.3px;height:1px;background:#e3e5e9;"></div>
<svg class="b" style="left:1913px;top:744.55px;fill:#4b4d63;" width="16" height="16" viewBox="0 0 16 16"><path d="M15.502 1.94a.5.5 0 0 1 0 .706L14.459 3.69l-2-2L13.502.646a.5.5 0 0 1 .707 0l1.293 1.293zm-1.75 2.456-2-2L4.939 9.21a.5.5 0 0 0-.121.196l-.805 2.414a.25.25 0 0 0 .316.316l2.414-.805a.5.5 0 0 0 .196-.12l6.813-6.814z"/><path fill-rule="evenodd" d="M1 13.5A1.5 1.5 0 0 0 2.5 15h11a1.5 1.5 0 0 0 1.5-1.5v-6a.5.5 0 0 0-1 0v6a.5.5 0 0 1-.5.5h-11a.5.5 0 0 1-.5-.5v-11a.5.5 0 0 1 .5-.5H9a.5.5 0 0 0 0-1H2.5A1.5 1.5 0 0 0 1 2.5v11z"/></svg>
<svg class="b" style="left:1941px;top:744.85px;fill:#4b4d63;" width="16" height="16" viewBox="0 0 16 16"><path d="M5.5 5.5A.5.5 0 0 1 6 6v6a.5.5 0 0 1-1 0V6a.5.5 0 0 1 .5-.5zm2.5 0a.5.5 0 0 1 .5.5v6a.5.5 0 0 1-1 0V6a.5.5 0 0 1 .5-.5zm3 .5a.5.5 0 0 0-1 0v6a.5.5 0 0 0 1 0V6z"/><path fill-rule="evenodd" d="M14.5 3a1 1 0 0 1-1 1H13v9a2 2 0 0 1-2 2H5a2 2 0 0 1-2-2V4h-.5a1 1 0 0 1-1-1V2a1 1 0 0 1 1-1H6a1 1 0 0 1 1-1h2a1 1 0 0 1 1 1h3.5a1 1 0 0 1 1 1v1zM4.118 4 4 4.059V13a1 1 0 0 0 1 1h6a1 1 0 0 0 1-1V4.059L11.882 4H4.118zM2.5 3V2h11v1h-11z"/></svg>
<span class="t" style="top:802px;font-size:15.6px;color:#257c6e;letter-spacing:0.911px;left:404.60px;-webkit-text-stroke:0.3px #257c6e;">Rezerwa na nieprzewidziane koszty postępowani</span>
<span class="t" style="top:802px;font-size:15.6px;color:#2b2c3a;letter-spacing:0.568px;right:1033.73px;-webkit-text-stroke:0.3px #2b2c3a;">3 000,00 zł</span>
<span class="t" style="top:802px;font-size:15.6px;color:#2b2c3a;letter-spacing:0.828px;left:1267.10px;-webkit-text-stroke:0.3px #2b2c3a;">Bufor finansowy przewidziany na pokrycie nieplano…</span>
<div class="b" style="left:389px;top:837px;width:1591.3px;height:1px;background:#e3e5e9;"></div>
<svg class="b" style="left:1913px;top:800.425px;fill:#4b4d63;" width="16" height="16" viewBox="0 0 16 16"><path d="M15.502 1.94a.5.5 0 0 1 0 .706L14.459 3.69l-2-2L13.502.646a.5.5 0 0 1 .707 0l1.293 1.293zm-1.75 2.456-2-2L4.939 9.21a.5.5 0 0 0-.121.196l-.805 2.414a.25.25 0 0 0 .316.316l2.414-.805a.5.5 0 0 0 .196-.12l6.813-6.814z"/><path fill-rule="evenodd" d="M1 13.5A1.5 1.5 0 0 0 2.5 15h11a1.5 1.5 0 0 0 1.5-1.5v-6a.5.5 0 0 0-1 0v6a.5.5 0 0 1-.5.5h-11a.5.5 0 0 1-.5-.5v-11a.5.5 0 0 1 .5-.5H9a.5.5 0 0 0 0-1H2.5A1.5 1.5 0 0 0 1 2.5v11z"/></svg>
<svg class="b" style="left:1941px;top:800.725px;fill:#4b4d63;" width="16" height="16" viewBox="0 0 16 16"><path d="M5.5 5.5A.5.5 0 0 1 6 6v6a.5.5 0 0 1-1 0V6a.5.5 0 0 1 .5-.5zm2.5 0a.5.5 0 0 1 .5.5v6a.5.5 0 0 1-1 0V6a.5.5 0 0 1 .5-.5zm3 .5a.5.5 0 0 0-1 0v6a.5.5 0 0 0 1 0V6z"/><path fill-rule="evenodd" d="M14.5 3a1 1 0 0 1-1 1H13v9a2 2 0 0 1-2 2H5a2 2 0 0 1-2-2V4h-.5a1 1 0 0 1-1-1V2a1 1 0 0 1 1-1H6a1 1 0 0 1 1-1h2a1 1 0 0 1 1 1h3.5a1 1 0 0 1 1 1v1zM4.118 4 4 4.059V13a1 1 0 0 0 1 1h6a1 1 0 0 0 1-1V4.059L11.882 4H4.118zM2.5 3V2h11v1h-11z"/></svg>
<span class="t" style="top:858px;font-size:15.6px;color:#257c6e;letter-spacing:0.829px;left:404.60px;-webkit-text-stroke:0.3px #257c6e;">Koszty transportu i logistyki</span>
<span class="t" style="top:858px;font-size:15.6px;color:#2b2c3a;letter-spacing:0.268px;right:1034.03px;-webkit-text-stroke:0.3px #2b2c3a;">1 000,00 zł</span>
<span class="t" style="top:858px;font-size:15.6px;color:#2b2c3a;letter-spacing:1.029px;left:1267.10px;-webkit-text-stroke:0.3px #2b2c3a;">Wydatki na dojazdy doradcy, transport dokumentacj…</span>
<div class="b" style="left:389px;top:893px;width:1591.3px;height:1px;background:#e3e5e9;"></div>
<svg class="b" style="left:1913px;top:856.3px;fill:#4b4d63;" width="16" height="16" viewBox="0 0 16 16"><path d="M15.502 1.94a.5.5 0 0 1 0 .706L14.459 3.69l-2-2L13.502.646a.5.5 0 0 1 .707 0l1.293 1.293zm-1.75 2.456-2-2L4.939 9.21a.5.5 0 0 0-.121.196l-.805 2.414a.25.25 0 0 0 .316.316l2.414-.805a.5.5 0 0 0 .196-.12l6.813-6.814z"/><path fill-rule="evenodd" d="M1 13.5A1.5 1.5 0 0 0 2.5 15h11a1.5 1.5 0 0 0 1.5-1.5v-6a.5.5 0 0 0-1 0v6a.5.5 0 0 1-.5.5h-11a.5.5 0 0 1-.5-.5v-11a.5.5 0 0 1 .5-.5H9a.5.5 0 0 0 0-1H2.5A1.5 1.5 0 0 0 1 2.5v11z"/></svg>
<svg class="b" style="left:1941px;top:856.6px;fill:#4b4d63;" width="16" height="16" viewBox="0 0 16 16"><path d="M5.5 5.5A.5.5 0 0 1 6 6v6a.5.5 0 0 1-1 0V6a.5.5 0 0 1 .5-.5zm2.5 0a.5.5 0 0 1 .5.5v6a.5.5 0 0 1-1 0V6a.5.5 0 0 1 .5-.5zm3 .5a.5.5 0 0 0-1 0v6a.5.5 0 0 0 1 0V6z"/><path fill-rule="evenodd" d="M14.5 3a1 1 0 0 1-1 1H13v9a2 2 0 0 1-2 2H5a2 2 0 0 1-2-2V4h-.5a1 1 0 0 1-1-1V2a1 1 0 0 1 1-1H6a1 1 0 0 1 1-1h2a1 1 0 0 1 1 1h3.5a1 1 0 0 1 1 1v1zM4.118 4 4 4.059V13a1 1 0 0 0 1 1h6a1 1 0 0 0 1-1V4.059L11.882 4H4.118zM2.5 3V2h11v1h-11z"/></svg>
<span class="t" style="top:914px;font-size:15.6px;color:#257c6e;letter-spacing:1.020px;left:404.60px;-webkit-text-stroke:0.3px #257c6e;">Koszty administracyjne kancelarii</span>
<span class="t" style="top:914px;font-size:15.6px;color:#2b2c3a;letter-spacing:0.568px;right:1033.73px;-webkit-text-stroke:0.3px #2b2c3a;">2 000,00 zł</span>
<span class="t" style="top:914px;font-size:15.6px;color:#2b2c3a;letter-spacing:0.901px;left:1267.10px;-webkit-text-stroke:0.3px #2b2c3a;">Wydatki związane z bieżącą obsługą administracyjn…</span>
<div class="b" style="left:389px;top:949px;width:1591.3px;height:1px;background:#e3e5e9;"></div>
<svg class="b" style="left:1913px;top:912.175px;fill:#4b4d63;" width="16" height="16" viewBox="0 0 16 16"><path d="M15.502 1.94a.5.5 0 0 1 0 .706L14.459 3.69l-2-2L13.502.646a.5.5 0 0 1 .707 0l1.293 1.293zm-1.75 2.456-2-2L4.939 9.21a.5.5 0 0 0-.121.196l-.805 2.414a.25.25 0 0 0 .316.316l2.414-.805a.5.5 0 0 0 .196-.12l6.813-6.814z"/><path fill-rule="evenodd" d="M1 13.5A1.5 1.5 0 0 0 2.5 15h11a1.5 1.5 0 0 0 1.5-1.5v-6a.5.5 0 0 0-1 0v6a.5.5 0 0 1-.5.5h-11a.5.5 0 0 1-.5-.5v-11a.5.5 0 0 1 .5-.5H9a.5.5 0 0 0 0-1H2.5A1.5 1.5 0 0 0 1 2.5v11z"/></svg>
<svg class="b" style="left:1941px;top:912.475px;fill:#4b4d63;" width="16" height="16" viewBox="0 0 16 16"><path d="M5.5 5.5A.5.5 0 0 1 6 6v6a.5.5 0 0 1-1 0V6a.5.5 0 0 1 .5-.5zm2.5 0a.5.5 0 0 1 .5.5v6a.5.5 0 0 1-1 0V6a.5.5 0 0 1 .5-.5zm3 .5a.5.5 0 0 0-1 0v6a.5.5 0 0 0 1 0V6z"/><path fill-rule="evenodd" d="M14.5 3a1 1 0 0 1-1 1H13v9a2 2 0 0 1-2 2H5a2 2 0 0 1-2-2V4h-.5a1 1 0 0 1-1-1V2a1 1 0 0 1 1-1H6a1 1 0 0 1 1-1h2a1 1 0 0 1 1 1h3.5a1 1 0 0 1 1 1v1zM4.118 4 4 4.059V13a1 1 0 0 0 1 1h6a1 1 0 0 0 1-1V4.059L11.882 4H4.118zM2.5 3V2h11v1h-11z"/></svg>
<span class="t" style="top:970px;font-size:15.6px;color:#257c6e;letter-spacing:0.864px;left:404.60px;-webkit-text-stroke:0.3px #257c6e;">Koszty księgowe i sprawozdawcze</span>
<span class="t" style="top:970px;font-size:15.6px;color:#2b2c3a;letter-spacing:0.618px;right:1033.68px;-webkit-text-stroke:0.3px #2b2c3a;">5 000,00 zł</span>
<span class="t" style="top:970px;font-size:15.6px;color:#2b2c3a;letter-spacing:0.933px;left:1267.10px;-webkit-text-stroke:0.3px #2b2c3a;">Wynagrodzenie biura rachunkowego lub działu finan…</span>
<div class="b" style="left:389px;top:1005px;width:1591.3px;height:1px;background:#e3e5e9;"></div>
<svg class="b" style="left:1913px;top:968.05px;fill:#4b4d63;" width="16" height="16" viewBox="0 0 16 16"><path d="M15.502 1.94a.5.5 0 0 1 0 .706L14.459 3.69l-2-2L13.502.646a.5.5 0 0 1 .707 0l1.293 1.293zm-1.75 2.456-2-2L4.939 9.21a.5.5 0 0 0-.121.196l-.805 2.414a.25.25 0 0 0 .316.316l2.414-.805a.5.5 0 0 0 .196-.12l6.813-6.814z"/><path fill-rule="evenodd" d="M1 13.5A1.5 1.5 0 0 0 2.5 15h11a1.5 1.5 0 0 0 1.5-1.5v-6a.5.5 0 0 0-1 0v6a.5.5 0 0 1-.5.5h-11a.5.5 0 0 1-.5-.5v-11a.5.5 0 0 1 .5-.5H9a.5.5 0 0 0 0-1H2.5A1.5 1.5 0 0 0 1 2.5v11z"/></svg>
<svg class="b" style="left:1941px;top:968.35px;fill:#4b4d63;" width="16" height="16" viewBox="0 0 16 16"><path d="M5.5 5.5A.5.5 0 0 1 6 6v6a.5.5 0 0 1-1 0V6a.5.5 0 0 1 .5-.5zm2.5 0a.5.5 0 0 1 .5.5v6a.5.5 0 0 1-1 0V6a.5.5 0 0 1 .5-.5zm3 .5a.5.5 0 0 0-1 0v6a.5.5 0 0 0 1 0V6z"/><path fill-rule="evenodd" d="M14.5 3a1 1 0 0 1-1 1H13v9a2 2 0 0 1-2 2H5a2 2 0 0 1-2-2V4h-.5a1 1 0 0 1-1-1V2a1 1 0 0 1 1-1H6a1 1 0 0 1 1-1h2a1 1 0 0 1 1 1h3.5a1 1 0 0 1 1 1v1zM4.118 4 4 4.059V13a1 1 0 0 0 1 1h6a1 1 0 0 0 1-1V4.059L11.882 4H4.118zM2.5 3V2h11v1h-11z"/></svg>
<span class="t" style="top:1026px;font-size:15.6px;color:#257c6e;letter-spacing:0.789px;left:404.60px;-webkit-text-stroke:0.3px #257c6e;">Koszty ogłoszeń i publikacji</span>
<span class="t" style="top:1026px;font-size:15.6px;color:#2b2c3a;letter-spacing:0.268px;right:1034.03px;-webkit-text-stroke:0.3px #2b2c3a;">1 500,00 zł</span>
<span class="t" style="top:1026px;font-size:15.6px;color:#2b2c3a;letter-spacing:0.785px;left:1267.10px;-webkit-text-stroke:0.3px #2b2c3a;">Opłaty związane z publikacją informacji o wszczęc…</span>
<div class="b" style="left:389px;top:1061px;width:1591.3px;height:1px;background:#e3e5e9;"></div>
<svg class="b" style="left:1913px;top:1023.9250000000001px;fill:#4b4d63;" width="16" height="16" viewBox="0 0 16 16"><path d="M15.502 1.94a.5.5 0 0 1 0 .706L14.459 3.69l-2-2L13.502.646a.5.5 0 0 1 .707 0l1.293 1.293zm-1.75 2.456-2-2L4.939 9.21a.5.5 0 0 0-.121.196l-.805 2.414a.25.25 0 0 0 .316.316l2.414-.805a.5.5 0 0 0 .196-.12l6.813-6.814z"/><path fill-rule="evenodd" d="M1 13.5A1.5 1.5 0 0 0 2.5 15h11a1.5 1.5 0 0 0 1.5-1.5v-6a.5.5 0 0 0-1 0v6a.5.5 0 0 1-.5.5h-11a.5.5 0 0 1-.5-.5v-11a.5.5 0 0 1 .5-.5H9a.5.5 0 0 0 0-1H2.5A1.5 1.5 0 0 0 1 2.5v11z"/></svg>
<svg class="b" style="left:1941px;top:1024.2250000000001px;fill:#4b4d63;" width="16" height="16" viewBox="0 0 16 16"><path d="M5.5 5.5A.5.5 0 0 1 6 6v6a.5.5 0 0 1-1 0V6a.5.5 0 0 1 .5-.5zm2.5 0a.5.5 0 0 1 .5.5v6a.5.5 0 0 1-1 0V6a.5.5 0 0 1 .5-.5zm3 .5a.5.5 0 0 0-1 0v6a.5.5 0 0 0 1 0V6z"/><path fill-rule="evenodd" d="M14.5 3a1 1 0 0 1-1 1H13v9a2 2 0 0 1-2 2H5a2 2 0 0 1-2-2V4h-.5a1 1 0 0 1-1-1V2a1 1 0 0 1 1-1H6a1 1 0 0 1 1-1h2a1 1 0 0 1 1 1h3.5a1 1 0 0 1 1 1v1zM4.118 4 4 4.059V13a1 1 0 0 0 1 1h6a1 1 0 0 0 1-1V4.059L11.882 4H4.118zM2.5 3V2h11v1h-11z"/></svg>
<span class="t" style="top:1081px;font-size:15.6px;color:#257c6e;letter-spacing:0.946px;left:404.60px;-webkit-text-stroke:0.3px #257c6e;">Koszty obsługi prawnej</span>
<span class="t" style="top:1081px;font-size:15.6px;color:#2b2c3a;letter-spacing:0.319px;right:1033.98px;-webkit-text-stroke:0.3px #2b2c3a;">10 000,00 zł</span>
<span class="t" style="top:1081px;font-size:15.6px;color:#2b2c3a;letter-spacing:0.831px;left:1267.10px;-webkit-text-stroke:0.3px #2b2c3a;">Wynagrodzenie kancelarii lub prawnika za reprezen…</span>
<div class="b" style="left:389px;top:1117px;width:1591.3px;height:1px;background:#e3e5e9;"></div>
<svg class="b" style="left:1913px;top:1079.8000000000002px;fill:#4b4d63;" width="16" height="16" viewBox="0 0 16 16"><path d="M15.502 1.94a.5.5 0 0 1 0 .706L14.459 3.69l-2-2L13.502.646a.5.5 0 0 1 .707 0l1.293 1.293zm-1.75 2.456-2-2L4.939 9.21a.5.5 0 0 0-.121.196l-.805 2.414a.25.25 0 0 0 .316.316l2.414-.805a.5.5 0 0 0 .196-.12l6.813-6.814z"/><path fill-rule="evenodd" d="M1 13.5A1.5 1.5 0 0 0 2.5 15h11a1.5 1.5 0 0 0 1.5-1.5v-6a.5.5 0 0 0-1 0v6a.5.5 0 0 1-.5.5h-11a.5.5 0 0 1-.5-.5v-11a.5.5 0 0 1 .5-.5H9a.5.5 0 0 0 0-1H2.5A1.5 1.5 0 0 0 1 2.5v11z"/></svg>
<svg class="b" style="left:1941px;top:1080.1000000000001px;fill:#4b4d63;" width="16" height="16" viewBox="0 0 16 16"><path d="M5.5 5.5A.5.5 0 0 1 6 6v6a.5.5 0 0 1-1 0V6a.5.5 0 0 1 .5-.5zm2.5 0a.5.5 0 0 1 .5.5v6a.5.5 0 0 1-1 0V6a.5.5 0 0 1 .5-.5zm3 .5a.5.5 0 0 0-1 0v6a.5.5 0 0 0 1 0V6z"/><path fill-rule="evenodd" d="M14.5 3a1 1 0 0 1-1 1H13v9a2 2 0 0 1-2 2H5a2 2 0 0 1-2-2V4h-.5a1 1 0 0 1-1-1V2a1 1 0 0 1 1-1H6a1 1 0 0 1 1-1h2a1 1 0 0 1 1 1h3.5a1 1 0 0 1 1 1v1zM4.118 4 4 4.059V13a1 1 0 0 0 1 1h6a1 1 0 0 0 1-1V4.059L11.882 4H4.118zM2.5 3V2h11v1h-11z"/></svg>
</div></body></html>
